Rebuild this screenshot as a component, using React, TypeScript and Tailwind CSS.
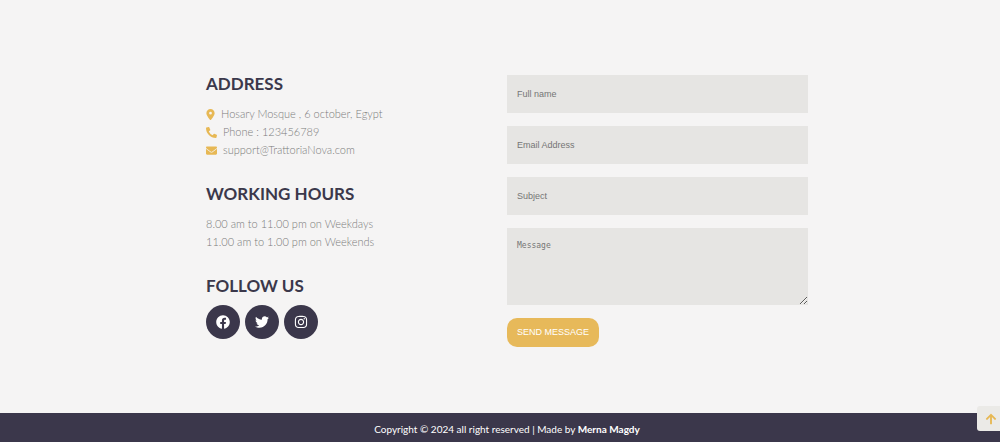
import {
  FaArrowUp,
  FaEnvelope,
  FaFacebook,
  FaInstagram,
  FaPhoneAlt,
  FaTwitter,
} from "react-icons/fa";
import { FaLocationDot } from "react-icons/fa6";

const headingClass =
  "text-[17px] leading-[18px] font-bold text-[#3b384b] uppercase";
const textClass = "text-[11px] leading-[18px] font-light text-[#7c7c7c]";
const fieldClass =
  "block w-full bg-[#e6e5e3] px-2.5 font-['Liberation_Sans',sans-serif] text-[9px] text-[#444] placeholder:text-[#757575] outline-none";
const socialClass =
  "flex size-[34px] items-center justify-center rounded-full bg-[#3b374b] text-[14px] text-white";

function ContactInfo() {
  return (
    <div className="font-['Lato',sans-serif]">
      <h3 className={headingClass}>Address</h3>
      <ul className={`mt-3 ${textClass}`}>
        <li className="flex items-center gap-1.5">
          <FaLocationDot className="w-[9px] text-[11px] text-[#e7b854]" />
          Hosary Mosque , 6 october, Egypt
        </li>
        <li className="flex items-center gap-1.5">
          <FaPhoneAlt className="text-[11px] text-[#e7b854]" />
          Phone : 123456789
        </li>
        <li className="flex items-center gap-1.5">
          <FaEnvelope className="text-[11px] text-[#e7b854]" />
          support@TrattoriaNova.com
        </li>
      </ul>

      <h3 className={`mt-[26px] ${headingClass}`}>Working Hours</h3>
      <div className={`mt-3 ${textClass}`}>
        <p>8.00 am to 11.00 pm on Weekdays</p>
        <p>11.00 am to 1.00 pm on Weekends</p>
      </div>

      <h3 className={`mt-[26px] ${headingClass}`}>Follow Us</h3>
      <div className="mt-2.5 flex gap-[5px]">
        <a href="#facebook" aria-label="Facebook" className={socialClass}>
          <FaFacebook />
        </a>
        <a href="#twitter" aria-label="Twitter" className={socialClass}>
          <FaTwitter />
        </a>
        <a href="#instagram" aria-label="Instagram" className={socialClass}>
          <FaInstagram />
        </a>
      </div>
    </div>
  );
}

function ContactForm() {
  return (
    <form className="flex flex-col items-start gap-[13px]">
      <input
        type="text"
        aria-label="Full name"
        placeholder="Full name"
        className={`h-[38px] ${fieldClass}`}
      />
      <input
        type="email"
        aria-label="Email Address"
        placeholder="Email Address"
        className={`h-[38px] ${fieldClass}`}
      />
      <input
        type="text"
        aria-label="Subject"
        placeholder="Subject"
        className={`h-[38px] ${fieldClass}`}
      />
      <textarea
        aria-label="Message"
        placeholder="Message"
        className="block h-[77px] w-full resize bg-[#e6e5e3] px-2.5 py-3 font-['DejaVu_Sans_Mono',monospace] text-[8px] text-[#444] placeholder:text-[#757575] outline-none"
      />
      <button
        type="button"
        className="h-[29px] rounded-[10px] bg-[#e7b95a] px-2.5 font-['Liberation_Sans',sans-serif] text-[9px] text-white uppercase"
      >
        Send Message
      </button>
    </form>
  );
}

export default function App() {
  return (
    <div className="relative flex min-h-screen flex-col bg-[#f5f4f4]">
      <section className="grow pt-[75px] pb-[65px] pl-3.5">
        <div className="mx-auto grid max-w-[602px] grid-cols-2">
          <ContactInfo />
          <ContactForm />
        </div>
      </section>
      <footer className="bg-[#3b374b] pt-[9px] pb-1.5 pl-3.5 text-center font-['Lato',sans-serif] text-[10px] leading-[14px] text-white">
        Copyright © 2024 all right reserved | Made by{" "}
        <span className="font-bold">Merna Magdy</span>
      </footer>
      <a
        href="#top"
        aria-label="Back to top"
        className="fixed right-0 bottom-[11px] flex h-[25px] w-[23px] items-center justify-center rounded-l-[3px] bg-[#ebeae7] pl-1 text-[12px] text-[#e7b854]"
      >
        <FaArrowUp />
      </a>
    </div>
  );
}
